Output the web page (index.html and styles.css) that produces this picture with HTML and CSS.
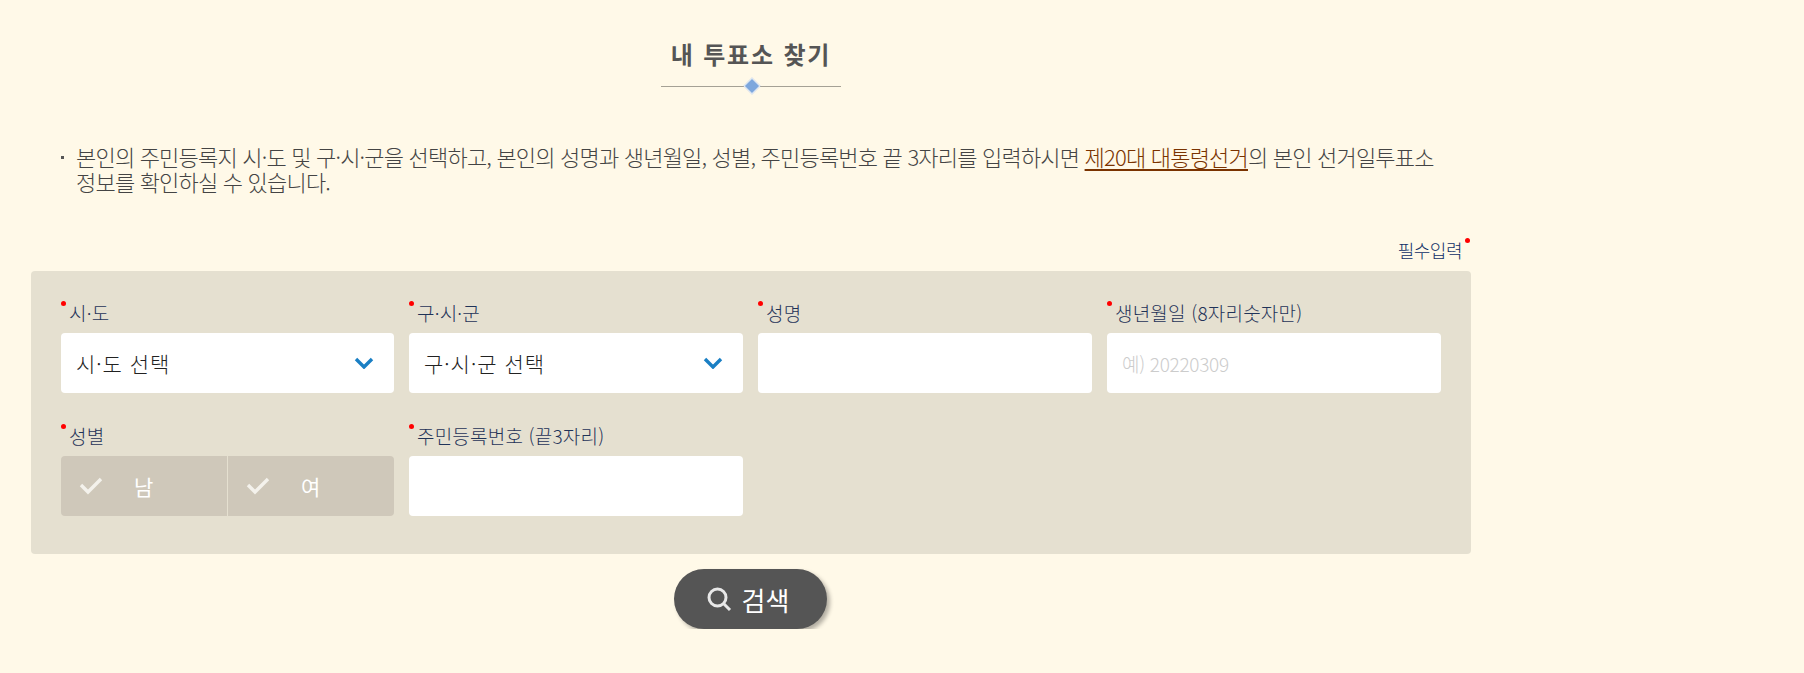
FILE: index.html
```html
<!DOCTYPE html>
<html lang="ko">
<head>
    <meta charset="UTF-8">
    <title>내 투표소 찾기</title>
    <link rel="stylesheet" href="styles.css">
</head>
<body>
    <div class="wrap">
        <h1 class="title">내 투표소 찾기</h1>
        <div class="title-line"><span class="diamond"></span></div>

        <ul class="intro">
            <li>본인의 주민등록지 시·도 및 구·시·군을 선택하고, 본인의 성명과 생년월일, 성별, 주민등록번호 끝 3자리를 입력하시면 <a href="#">제20대 대통령선거</a>의 본인 선거일투표소 정보를 확인하실 수 있습니다.</li>
        </ul>

        <div class="required-note"><span class="req req-note">필수입력</span></div>

        <form class="search-box">
            <div class="field">
                <label class="req">시·도</label>
                <div class="select-wrap">
                    <select><option>시·도 선택</option></select>
                    <svg class="arrow" width="20" height="12" viewBox="0 0 20 12"><path d="M2 2l8 8 8-8" fill="none" stroke="#1a7fc4" stroke-width="3.4"/></svg>
                </div>
            </div>
            <div class="field">
                <label class="req">구·시·군</label>
                <div class="select-wrap">
                    <select><option>구·시·군 선택</option></select>
                    <svg class="arrow" width="20" height="12" viewBox="0 0 20 12"><path d="M2 2l8 8 8-8" fill="none" stroke="#1a7fc4" stroke-width="3.4"/></svg>
                </div>
            </div>
            <div class="field">
                <label class="req">성명</label>
                <input type="text">
            </div>
            <div class="field">
                <label class="req">생년월일 (8자리숫자만)</label>
                <input type="text" placeholder="예) 20220309">
            </div>
            <div class="field">
                <label class="req">성별</label>
                <div class="gender">
                    <div class="gender-item">
                        <svg width="24" height="18" viewBox="0 0 24 18"><path d="M2 8l7 7L22 2" fill="none" stroke="#f4f2ec" stroke-width="3.4"/></svg>
                        <span>남</span>
                    </div>
                    <div class="gender-item">
                        <svg width="24" height="18" viewBox="0 0 24 18"><path d="M2 8l7 7L22 2" fill="none" stroke="#f4f2ec" stroke-width="3.4"/></svg>
                        <span>여</span>
                    </div>
                </div>
            </div>
            <div class="field">
                <label class="req">주민등록번호 (끝3자리)</label>
                <input type="text">
            </div>
        </form>

        <div class="actions">
            <button type="button" class="btn-search">
                <svg width="25" height="25" viewBox="0 0 25 25"><circle cx="10.5" cy="10.5" r="8.5" fill="none" stroke="#e8e8e8" stroke-width="3"/><path d="M17 17l6 6" stroke="#e8e8e8" stroke-width="3"/></svg>
                검색
            </button>
        </div>
    </div>
</body>
</html>
```

FILE: styles.css
```css
* {
    margin: 0;
    padding: 0;
    box-sizing: border-box;
}

body {
    background: #fff9e8;
    font-family: "Noto Sans CJK KR", "Noto Sans", sans-serif;
    color: #555;
}

.wrap {
    width: 1440px;
    margin-left: 31px;
}

.title {
    padding-top: 37px;
    font-size: 24px;
    line-height: 34px;
    font-weight: 700;
    letter-spacing: 1.8px;
    text-align: center;
    color: #555;
}

.title-line {
    position: relative;
    width: 180px;
    height: 1px;
    margin: 15px auto 0;
    background: #a5a195;
}

.diamond {
    position: absolute;
    left: 85px;
    top: -6px;
    width: 12px;
    height: 12px;
    background: #7da7dd;
    border: 1px solid #e8eef5;
    transform: rotate(45deg);
}

.intro {
    list-style: none;
    margin-top: 57px;
    padding: 0 30px 0 45px;
}

.intro li {
    position: relative;
    font-size: 22px;
    font-weight: 300;
    line-height: 25px;
    letter-spacing: -0.8px;
    color: #444;
}

.intro li::before {
    content: "";
    position: absolute;
    left: -15px;
    top: 12px;
    width: 3px;
    height: 3px;
    background: #555;
}

.intro a {
    color: #7a3300;
    text-decoration: underline;
    text-decoration-thickness: 2px;
    text-underline-offset: 3px;
}

.required-note {
    margin-top: 44px;
    padding-right: 9px;
    text-align: right;
    font-size: 18px;
    font-weight: 300;
    line-height: 24px;
    letter-spacing: -0.5px;
    color: #0f2f66;
}

.req {
    position: relative;
}

.req::before {
    content: "";
    position: absolute;
    left: -7px;
    top: 0;
    width: 5px;
    height: 5px;
    border-radius: 50%;
    background: #f00;
}

.req-note::before {
    left: auto;
    right: -8px;
    top: 1px;
}

.search-box {
    display: grid;
    grid-template-columns: 333px 334px 334px 334px;
    gap: 28px 15px;
    height: 283px;
    margin-top: 9px;
    padding: 27px 30px 0;
    align-content: start;
    background: #e5e0d0;
    border-radius: 4px;
}

.field label {
    display: block;
    height: 35px;
    padding-left: 8px;
    font-size: 19px;
    font-weight: 300;
    line-height: 30px;
    letter-spacing: 0.2px;
    color: #1f3358;
}

.field label.req::before {
    left: 0;
    top: 3px;
}

.select-wrap {
    position: relative;
}

select,
input {
    display: block;
    width: 100%;
    height: 60px;
    border: none;
    border-radius: 4px;
    background: #fff;
    font-family: inherit;
    font-weight: 300;
    outline: none;
}

select {
    appearance: none;
    padding-left: 15px;
    font-size: 21px;
    letter-spacing: 1px;
    color: #222;
}

input {
    padding: 0 15px;
    font-size: 19px;
    letter-spacing: -0.3px;
}

input::placeholder {
    color: #ccc;
}

.arrow {
    position: absolute;
    right: 20px;
    top: 24px;
}

.gender {
    display: flex;
    height: 60px;
    border-radius: 4px;
    overflow: hidden;
    background: #cfc8ba;
}

.gender-item {
    flex: 1;
    display: flex;
    align-items: center;
    padding-left: 18px;
    color: #fff;
    font-size: 21px;
}

.gender-item + .gender-item {
    border-left: 1px solid #e5e0d0;
}

.gender-item span {
    margin-left: 31px;
}

.actions {
    display: flex;
    justify-content: center;
    margin-top: 15px;
}

.btn-search {
    display: flex;
    align-items: center;
    justify-content: center;
    gap: 10px;
    width: 153px;
    height: 60px;
    margin-right: 2px;
    padding-right: 4px;
    border: none;
    border-radius: 30px;
    background: #555;
    box-shadow: 3px 3px 4px rgba(0, 0, 0, 0.3);
    font-family: inherit;
    font-size: 26px;
    color: #fff;
}
```
